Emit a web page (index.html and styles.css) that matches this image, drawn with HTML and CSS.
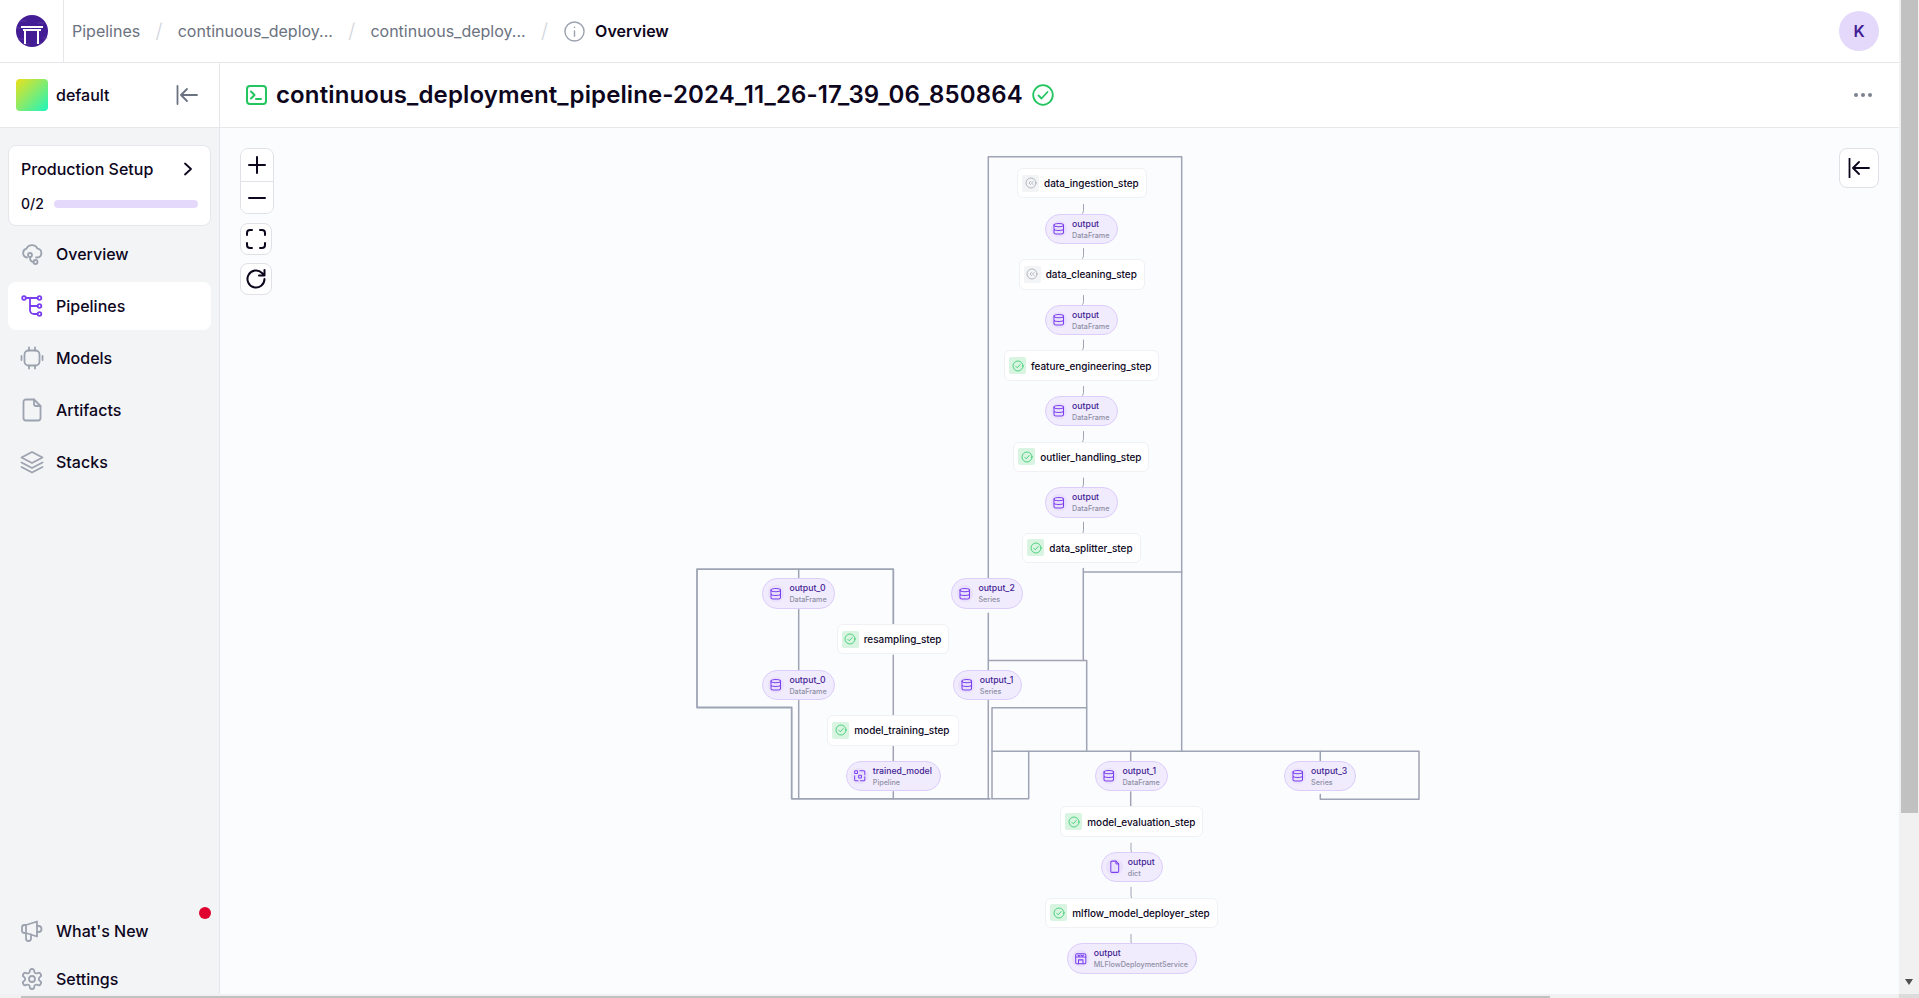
FILE: index.html
```html
<!DOCTYPE html>
<html lang="en">
<head>
<meta charset="utf-8">
<title>continuous_deployment_pipeline</title>
<link rel="stylesheet" href="styles.css">
</head>
<body>
<svg class="defs" width="0" height="0" aria-hidden="true">
  <symbol id="i-ok" viewBox="0 0 24 24"><circle cx="12" cy="12" r="10"/><path d="M7.5 12.5l3 3 6-6.5"/></symbol>
  <symbol id="i-cached" viewBox="0 0 24 24"><circle cx="12" cy="12" r="10"/><path d="M11 9l-3 3 3 3M16 9l-3 3 3 3"/></symbol>
  <symbol id="i-db" viewBox="0 0 24 24"><ellipse cx="12" cy="5.5" rx="8.5" ry="3"/><path d="M3.5 5.500v13c0 1.700 3.800 3 8.500 3s8.500-1.300 8.500-3v-13M3.500 12c0 1.700 3.800 3 8.500 3s8.500-1.300 8.500-3"/></symbol>
  <symbol id="i-doc" viewBox="0 0 24 24"><path d="M14 2H7a2 2 0 0 0-2 2v16a2 2 0 0 0 2 2h10a2 2 0 0 0 2-2V7z"/><path d="M14 2v3.500A1.500 1.500 0 0 0 15.500 7H19"/></symbol>
  <symbol id="i-model" viewBox="0 0 24 24"><rect x="3" y="3" width="5" height="5" rx="1"/><rect x="10" y="11" width="5" height="5" rx="1"/><path d="M12 3h7a2 2 0 0 1 2 2v5M3 12v7a2 2 0 0 0 2 2h4M13 21h6a2 2 0 0 0 2-2v-5M21 14v3"/></symbol>
  <symbol id="i-service" viewBox="0 0 24 24"><rect x="3" y="3" width="18" height="18" rx="2.500"/><path d="M3 9h18M7 5.500l2 2 2-2M13 5.500l2 2 2-2M8 21v-7h8v7"/></symbol>
</svg>
<div class="app">
  <div class="main">
    <header class="topbar">
      <div class="brand">
        <svg class="logo" viewBox="0 0 32 32" width="32" height="32">
          <circle cx="16" cy="16" r="16" fill="#431d93"/>
          <path class="logo-lines" d="M4 6h6M22 8h6M1 13h4M27 23h4M3 24h5M7 29h6M20 28h5"/>
          <path d="M5 11h22v2H5zM7 14h18v2H7zM8 16h2v13H8zM21 16h2v13h-2zM15 14h2v2h-2z" fill="#fff"/>
        </svg>
      </div>
      <nav class="crumbs">
        <span class="crumb">Pipelines</span><span class="slash">/</span>
        <span class="crumb">continuous_deploy...</span><span class="slash">/</span>
        <span class="crumb">continuous_deploy...</span><span class="slash">/</span>
        <svg class="info" viewBox="0 0 22 22" width="21" height="21"><circle cx="11" cy="11" r="10"/><path d="M11 10.500v5.500M11 6.500v.2"/></svg>
        <span class="crumb-current">Overview</span>
      </nav>
      <div class="avatar">K</div>
    </header>
    <div class="body">
      <aside class="sidebar">
        <div class="workspace">
          <span class="ws-swatch"></span>
          <span class="ws-name">default</span>
          <svg class="ws-collapse" viewBox="0 0 22 20" width="22" height="20"><path d="M1.500 1v18M21 10H6M11 4l-6 6 6 6"/></svg>
        </div>
        <div class="side-content">
          <section class="setup">
            <div class="setup-head">
              <span>Production Setup</span>
              <svg viewBox="0 0 10 14" width="10" height="14"><path d="M2 1.500l6 5.500-6 5.500"/></svg>
            </div>
            <div class="setup-progress"><span class="setup-count">0/2</span><div class="bar"></div></div>
          </section>
          <a class="nav">
            <svg class="nav-ico" viewBox="0 0 24 24"><path d="M7 15.500a4.500 4.500 0 0 1-.5-8.800 6 6 0 0 1 11 0 4.500 4.500 0 0 1 .5 8.800h-2"/><circle cx="10" cy="13" r="2"/><circle cx="15.500" cy="20" r="2"/><path d="M10 15c0 3 1.500 5 3.500 5"/></svg>
            <span>Overview</span>
          </a>
          <a class="nav active">
            <svg class="nav-ico" viewBox="0 0 24 24"><circle cx="4" cy="4" r="1.800"/><circle cx="19.500" cy="4" r="1.800"/><circle cx="19.500" cy="12" r="1.800"/><circle cx="19.500" cy="20" r="1.800"/><path d="M6 4h11.500M10 4v12a4 4 0 0 0 4 4h3.500M10 12h7.500"/></svg>
            <span>Pipelines</span>
          </a>
          <a class="nav">
            <svg class="nav-ico" viewBox="0 0 24 24"><rect x="4.500" y="4.500" width="15" height="15" rx="4"/><path d="M9 1.500v3M15 1.500v3M9 19.500v3M15 19.500v3M1.500 10v4M22.500 10v4"/></svg>
            <span>Models</span>
          </a>
          <a class="nav">
            <svg class="nav-ico" viewBox="0 0 24 24"><path d="M14 1.500H6a2.500 2.500 0 0 0-2.500 2.500v16A2.500 2.500 0 0 0 6 22.500h12a2.500 2.500 0 0 0 2.500-2.500V8z"/><path d="M14 1.500V6a2 2 0 0 0 2 2h4.500"/></svg>
            <span>Artifacts</span>
          </a>
          <a class="nav">
            <svg class="nav-ico" viewBox="0 0 24 24"><path d="M12 2L1.500 7.500 12 13l10.500-5.500zM1.500 12.500L12 18l10.500-5.500M1.500 17L12 22.500 22.500 17"/></svg>
            <span>Stacks</span>
          </a>
          <div class="side-bottom">
            <a class="nav news">
              <svg class="nav-ico" viewBox="0 0 24 24"><path d="M17 2.500L6 6H4.500a2.500 2.500 0 0 0-2.500 2.500v3A2.500 2.500 0 0 0 4.500 14H6l11 3.500zM6 6v8"/><path d="M6 14v5.500a2.500 2.500 0 0 0 5 0v-4M17 7h1.500a3 3 0 0 1 0 6H17"/></svg>
              <span>What's New</span>
              <i class="dot"></i>
            </a>
            <a class="nav">
              <svg class="nav-ico" viewBox="0 0 24 24"><path d="M12.220 2h-.44a2 2 0 0 0-2 2v.18a2 2 0 0 1-1 1.730l-.43.25a2 2 0 0 1-2 0l-.15-.08a2 2 0 0 0-2.730.73l-.22.38a2 2 0 0 0 .73 2.730l.15.1a2 2 0 0 1 1 1.720v.51a2 2 0 0 1-1 1.740l-.15.09a2 2 0 0 0-.73 2.730l.22.38a2 2 0 0 0 2.730.73l.15-.08a2 2 0 0 1 2 0l.43.25a2 2 0 0 1 1 1.730V20a2 2 0 0 0 2 2h.44a2 2 0 0 0 2-2v-.18a2 2 0 0 1 1-1.730l.43-.25a2 2 0 0 1 2 0l.15.08a2 2 0 0 0 2.730-.73l.22-.39a2 2 0 0 0-.73-2.730l-.15-.08a2 2 0 0 1-1-1.740v-.5a2 2 0 0 1 1-1.740l.15-.09a2 2 0 0 0 .73-2.730l-.22-.38a2 2 0 0 0-2.730-.73l-.15.08a2 2 0 0 1-2 0l-.43-.25a2 2 0 0 1-1-1.730V4a2 2 0 0 0-2-2z"/><circle cx="12" cy="12" r="3"/></svg>
              <span>Settings</span>
            </a>
          </div>
        </div>
      </aside>
      <main class="content">
        <div class="titlebar">
          <svg class="title-ico" viewBox="0 0 21 20" width="21" height="20"><rect x="1" y="1" width="19" height="18" rx="3"/><path d="M5 6.500l3.500 3.500L5 13.500M10 14h5"/></svg>
          <h1>continuous_deployment_pipeline-2024_11_26-17_39_06_850864</h1>
          <svg class="title-ok" viewBox="0 0 22 22" width="22" height="22"><circle cx="11" cy="11" r="9.800"/><path d="M6.500 11.500l3 3 6-6.500"/></svg>
          <svg class="more" viewBox="0 0 18 4" width="18" height="4"><circle cx="2" cy="2" r="2"/><circle cx="9" cy="2" r="2"/><circle cx="16" cy="2" r="2"/></svg>
        </div>
        <div class="canvas">
          <div class="controls">
            <div class="zoom-group">
              <button class="ctrl"><svg viewBox="0 0 24 24" width="24" height="24"><path d="M12 4v16M4 12h16"/></svg></button>
              <button class="ctrl ctrl-split"><svg viewBox="0 0 24 24" width="24" height="24"><path d="M4 12h16"/></svg></button>
            </div>
            <button class="ctrl ctrl-solo"><svg viewBox="0 0 24 24" width="24" height="24"><path d="M8 3H6a3 3 0 0 0-3 3v2M16 3h2a3 3 0 0 1 3 3v2M8 21H6a3 3 0 0 1-3-3v-2M16 21h2a3 3 0 0 0 3-3v-2"/></svg></button>
            <button class="ctrl ctrl-solo"><svg viewBox="0 0 24 24" width="24" height="24"><path d="M20.500 12a8.500 8.500 0 1 1-2.500-6L20.500 8.500M20.500 3v5.500H15"/></svg></button>
          </div>
          <button class="panel-toggle"><svg viewBox="0 0 22 20" width="22" height="20"><path d="M1.500 0v20M21 10H6M11 4l-6 6 6 6"/></svg></button>

          <svg class="edges" viewBox="220 127.500 1679 866">
            <path class="e" d="M988.300 578V156.300H1181.700V750.700"/>
            <path class="e" d="M1083.300 568V660M1083.300 571.500H1181.700"/>
            <path class="e" d="M988.300 612.700V798.300M988.300 660H1086.700V750.700"/>
            <path class="e" d="M992 798.300V707.300H1086.700"/>
            <path class="e" d="M992 750.700H1419V798.700H1320.300V794"/>
            <path class="e" d="M992 798.300H1028.700V750.700"/>
            <path class="e" d="M1130.700 750.700V761M1130.700 791.500V806"/>
            <path class="e" d="M1320.300 750.700V761"/>
            <path class="e e-thick" d="M893.300 624V568.700H697V707H791.700V798.300H990"/>
            <path class="e" d="M798.700 568.700V578M798.700 609V670M798.700 700V798.300"/>
            <path class="e" d="M893.300 654.700V715M893.300 746V761M893.300 791.300V798.300"/>
            <path class="c" d="M1083.500 204v6q0 2-1 3M1083.500 248v7q0 2-1 3M1083.500 295v6q0 2-1 3M1083.500 339.500v7q0 2-1 3M1083.500 386v6q0 2-1 3M1083.500 431v7q0 2-1 3.500M1083.500 477.500v6q0 2-1 3M1083.500 521.700v8q0 2-1 3.300"/>
            <path class="c" d="M1131 842.700v6q0 2 .5 3M1131 886.700v7q0 2 .5 3.500M1131 934v6q0 2 .5 2.700"/>
          </svg>

          <div class="node step" style="left:797px;top:40px;width:130px"><span class="badge cached"><svg><use href="#i-cached"/></svg></span><span class="name">data_ingestion_step</span></div>
          <div class="node pill" style="left:825px;top:85.600px;width:73px"><span class="pico"><svg><use href="#i-db"/></svg></span><span class="ptext"><b>output</b><small>DataFrame</small></span></div>
          <div class="node step" style="left:798.700px;top:131.200px;width:126px"><span class="badge cached"><svg><use href="#i-cached"/></svg></span><span class="name">data_cleaning_step</span></div>
          <div class="node pill" style="left:825px;top:176.800px;width:73px"><span class="pico"><svg><use href="#i-db"/></svg></span><span class="ptext"><b>output</b><small>DataFrame</small></span></div>
          <div class="node step" style="left:784px;top:222.400px;width:155.300px"><span class="badge ok"><svg><use href="#i-ok"/></svg></span><span class="name">feature_engineering_step</span></div>
          <div class="node pill" style="left:825px;top:268px;width:73px"><span class="pico"><svg><use href="#i-db"/></svg></span><span class="ptext"><b>output</b><small>DataFrame</small></span></div>
          <div class="node step" style="left:793.300px;top:313.600px;width:136px"><span class="badge ok"><svg><use href="#i-ok"/></svg></span><span class="name">outlier_handling_step</span></div>
          <div class="node pill" style="left:825px;top:359.200px;width:73px"><span class="pico"><svg><use href="#i-db"/></svg></span><span class="ptext"><b>output</b><small>DataFrame</small></span></div>
          <div class="node step" style="left:802.300px;top:404.800px;width:118.400px"><span class="badge ok"><svg><use href="#i-ok"/></svg></span><span class="name">data_splitter_step</span></div>

          <div class="node pill" style="left:542.300px;top:450.400px;width:73px"><span class="pico"><svg><use href="#i-db"/></svg></span><span class="ptext"><b>output_0</b><small>DataFrame</small></span></div>
          <div class="node pill" style="left:731.300px;top:450.400px;width:71.700px"><span class="pico"><svg><use href="#i-db"/></svg></span><span class="ptext"><b>output_2</b><small>Series</small></span></div>
          <div class="node step" style="left:616.700px;top:496px;width:112.600px"><span class="badge ok"><svg><use href="#i-ok"/></svg></span><span class="name">resampling_step</span></div>
          <div class="node pill" style="left:542.300px;top:541.600px;width:73px"><span class="pico"><svg><use href="#i-db"/></svg></span><span class="ptext"><b>output_0</b><small>DataFrame</small></span></div>
          <div class="node pill" style="left:732.700px;top:541.600px;width:69.300px"><span class="pico"><svg><use href="#i-db"/></svg></span><span class="ptext"><b>output_1</b><small>Series</small></span></div>
          <div class="node step" style="left:607.300px;top:587.200px;width:131.400px"><span class="badge ok"><svg><use href="#i-ok"/></svg></span><span class="name">model_training_step</span></div>
          <div class="node pill" style="left:625.700px;top:632.800px;width:95px"><span class="pico"><svg><use href="#i-model"/></svg></span><span class="ptext"><b>trained_model</b><small>Pipeline</small></span></div>
          <div class="node pill" style="left:875.300px;top:632.800px;width:72.700px"><span class="pico"><svg><use href="#i-db"/></svg></span><span class="ptext"><b>output_1</b><small>DataFrame</small></span></div>
          <div class="node pill" style="left:1064px;top:632.800px;width:72px"><span class="pico"><svg><use href="#i-db"/></svg></span><span class="ptext"><b>output_3</b><small>Series</small></span></div>
          <div class="node step" style="left:840.300px;top:678.400px;width:142.700px"><span class="badge ok"><svg><use href="#i-ok"/></svg></span><span class="name">model_evaluation_step</span></div>
          <div class="node pill" style="left:880.700px;top:724px;width:62px"><span class="pico"><svg><use href="#i-doc"/></svg></span><span class="ptext"><b>output</b><small>dict</small></span></div>
          <div class="node step" style="left:825.300px;top:769.600px;width:172.400px"><span class="badge ok"><svg><use href="#i-ok"/></svg></span><span class="name">mlflow_model_deployer_step</span></div>
          <div class="node pill" style="left:846.700px;top:815.200px;width:130px"><span class="pico"><svg><use href="#i-service"/></svg></span><span class="ptext"><b>output</b><small>MLFlowDeploymentService</small></span></div>
        </div>
      </main>
    </div>
  </div>
  <div class="vscroll"><div class="vthumb"></div><i class="varrow"></i></div>
  <div class="hscroll"><div class="hthumb"></div></div>
  <div class="corner"></div>
</div>
</body>
</html>
```

FILE: styles.css
```css
* { box-sizing: border-box; }
html, body { margin: 0; height: 100%; overflow: hidden; }
body { font-family: Inter, "Noto Sans", sans-serif; color: #0d061d; background: #fff; }
.defs { position: absolute; }
svg { display: block; flex: none; fill: none; stroke-linecap: round; stroke-linejoin: round; }

.app { display: grid; grid-template-columns: 1fr 20px; grid-template-rows: 1fr 4px; height: 100vh; }
.main { display: flex; flex-direction: column; min-width: 0; min-height: 0; overflow: hidden; }

.topbar { flex: none; display: flex; align-items: center; height: 63px; border-bottom: 1px solid #e5e7eb; padding-right: 20px; background: #fff; }
.brand { width: 64px; height: 100%; border-right: 1px solid #e5e7eb; padding-left: 16px; display: flex; align-items: center; }
.logo-lines { stroke: #6c4bb0; stroke-width: .6; }
.crumbs { display: flex; align-items: center; font-size: 16px; margin-left: 8px; flex: 1; }
.crumb { color: #6b7280; }
.slash { color: #d1d5db; font-size: 20px; font-weight: 300; width: 37.500px; text-align: center; }
.info { stroke: #9ca3af; stroke-width: 1.5; margin-right: 10px; margin-left: 1px; }
.crumb-current { font-weight: 600; color: #0d061d; }
.avatar { width: 40px; height: 40px; border-radius: 50%; background: #e4d9fb; color: #431d93; display: flex; align-items: center; justify-content: center; font-size: 16px; font-weight: 600; }

.body { flex: 1; display: flex; min-height: 0; }
.sidebar { flex: none; width: 220px; display: flex; flex-direction: column; background: #f3f4f6; border-right: 1px solid #e5e7eb; min-height: 0; }
.workspace { flex: none; height: 65px; background: #fff; border-bottom: 1px solid #e5e7eb; display: flex; align-items: center; padding-left: 16px; padding-right: 21px; }
.ws-swatch { width: 32px; height: 32px; border-radius: 4px; background: linear-gradient(135deg, #ece11a, #1df5bf); }
.ws-name { font-size: 16px; font-weight: 500; margin-left: 8px; flex: 1; }
.ws-collapse { stroke: #6b7280; stroke-width: 1.8; }

.side-content { flex: 1; min-height: 0; display: flex; flex-direction: column; padding: 17px 8px 0; overflow: hidden; }
.setup { flex: none; height: 81px; background: #fff; border: 1px solid #e5e7eb; border-radius: 8px; padding: 0 12px; margin-bottom: 4px; }
.setup-head { display: flex; align-items: center; justify-content: space-between; height: 46px; font-size: 16px; font-weight: 500; padding-right: 5px; }
.setup-head svg { stroke: #0d061d; stroke-width: 1.8; }
.setup-progress { display: flex; align-items: center; gap: 10px; font-size: 14px; font-weight: 500; height: 16px; margin-top: 4px; }
.setup-count { margin-bottom: 2px; }
.bar { flex: 1; height: 8px; border-radius: 4px; background: #e4d9fb; }

.nav { flex: none; position: relative; display: flex; align-items: center; height: 48px; margin-bottom: 4px; padding-left: 12px; gap: 12px; border-radius: 8px; font-size: 16px; font-weight: 500; color: #0d061d; }
.nav-ico { width: 24px; height: 24px; stroke: #9ca3af; stroke-width: 1.8; }
.nav.active { background: #fff; }
.nav.active .nav-ico { stroke: #7a3ef0; }
.side-bottom { margin-top: auto; flex: none; margin-bottom: -9px; display: flex; flex-direction: column; }
.side-bottom .nav { margin-bottom: 0; }
.dot { position: absolute; top: 0; right: 0; width: 12px; height: 12px; border-radius: 50%; background: #e0032f; }

.content { flex: 1; min-width: 0; display: flex; flex-direction: column; }
.titlebar { flex: none; height: 65px; background: #fff; border-bottom: 1px solid #e5e7eb; display: flex; align-items: center; padding-left: 26px; padding-right: 27px; }
.title-ico { stroke: #22c55e; stroke-width: 2; }
.titlebar h1 { margin: 0 0 0 9px; font-size: 24px; line-height: 32px; font-weight: 600; letter-spacing: .12px; color: #0d061d; white-space: nowrap; }
.title-ok { stroke: #22c55e; stroke-width: 1.8; margin-left: 9px; }
.more { margin-left: auto; }
.more circle { fill: #7b8190; stroke: none; }

.canvas { flex: 1; position: relative; min-height: 0; overflow: hidden; background: #fbfcfe; }
.controls { position: absolute; left: 20px; top: 20px; display: flex; flex-direction: column; align-items: flex-start; gap: 8.500px; z-index: 3; }
.zoom-group { width: 34px; border: 1px solid #dfe1e6; border-radius: 8px; background: #fff; overflow: hidden; }
.ctrl { display: flex; align-items: center; justify-content: center; width: 32px; height: 32px; padding: 0; border: 0; background: #fff; }
.ctrl svg { stroke: #0d061d; stroke-width: 2; }
.ctrl-split { border-top: 1px solid #dfe1e6; }
.ctrl-solo { border: 1px solid #dfe1e6; border-radius: 8px; }
.panel-toggle { position: absolute; right: 20px; top: 20px; width: 40px; height: 40px; display: flex; align-items: center; justify-content: center; padding: 0; background: #fff; border: 1px solid #dfe1e6; border-radius: 8px; z-index: 3; }
.panel-toggle svg { stroke: #0d061d; stroke-width: 1.8; }

.edges { position: absolute; inset: 0; width: 100%; height: 100%; }
.e { stroke: #9ea4b4; stroke-width: 1.500; }
.e-thick { stroke-width: 1.800; }
.c { stroke: #9ea4b4; stroke-width: 1; }

.node { position: absolute; height: 30.400px; display: flex; align-items: center; white-space: nowrap; }
.step { background: #fff; border: 1px solid #f0f1f5; border-radius: 6px; gap: 5px; padding-left: 4px; }
.name { font-size: 9.950px; font-weight: 500; color: #0d061d; }
.badge { width: 17px; height: 17px; border-radius: 2px; display: flex; align-items: center; justify-content: center; flex: none; }
.badge svg { width: 12px; height: 12px; stroke-width: 1.500; }
.badge.ok { background: #d9f5e2; }
.badge.ok svg { stroke: #22c55e; }
.badge.cached { background: #f3f4f6; }
.badge.cached svg { stroke: #9ca3af; }
.pill { background: #f1ebfe; border: 1px solid #dccdfa; border-radius: 15.200px; gap: 5px; padding-left: 4.600px; }
.pico { width: 16.500px; height: 16.500px; border-radius: 50%; background: #e9e0fc; display: flex; align-items: center; justify-content: center; flex: none; }
.pico svg { width: 13.500px; height: 13.500px; stroke: #7a3ef0; stroke-width: 1.800; }
.ptext { display: flex; flex-direction: column; gap: 2px; line-height: 9px; padding-top: 1.500px; }
.ptext b { font-size: 8.700px; font-weight: 500; color: #431d93; }
.ptext small { font-size: 7.200px; font-weight: 500; color: #8e90a3; }

.vscroll { position: relative; background: #f1f1f1; padding-left: 2px; }
.vthumb { width: 17px; height: 813px; background: #c1c1c1; }
.varrow { position: absolute; left: 6px; bottom: 9px; width: 0; height: 0; border-left: 4.500px solid transparent; border-right: 4.500px solid transparent; border-top: 6px solid #505050; }
.hscroll { background: #f1f1f1; padding: 2px 0 0 21px; overflow: hidden; }
.hthumb { width: 1529px; height: 2px; background: #c1c1c1; }
.corner { background: #dcdcdc; }
```
